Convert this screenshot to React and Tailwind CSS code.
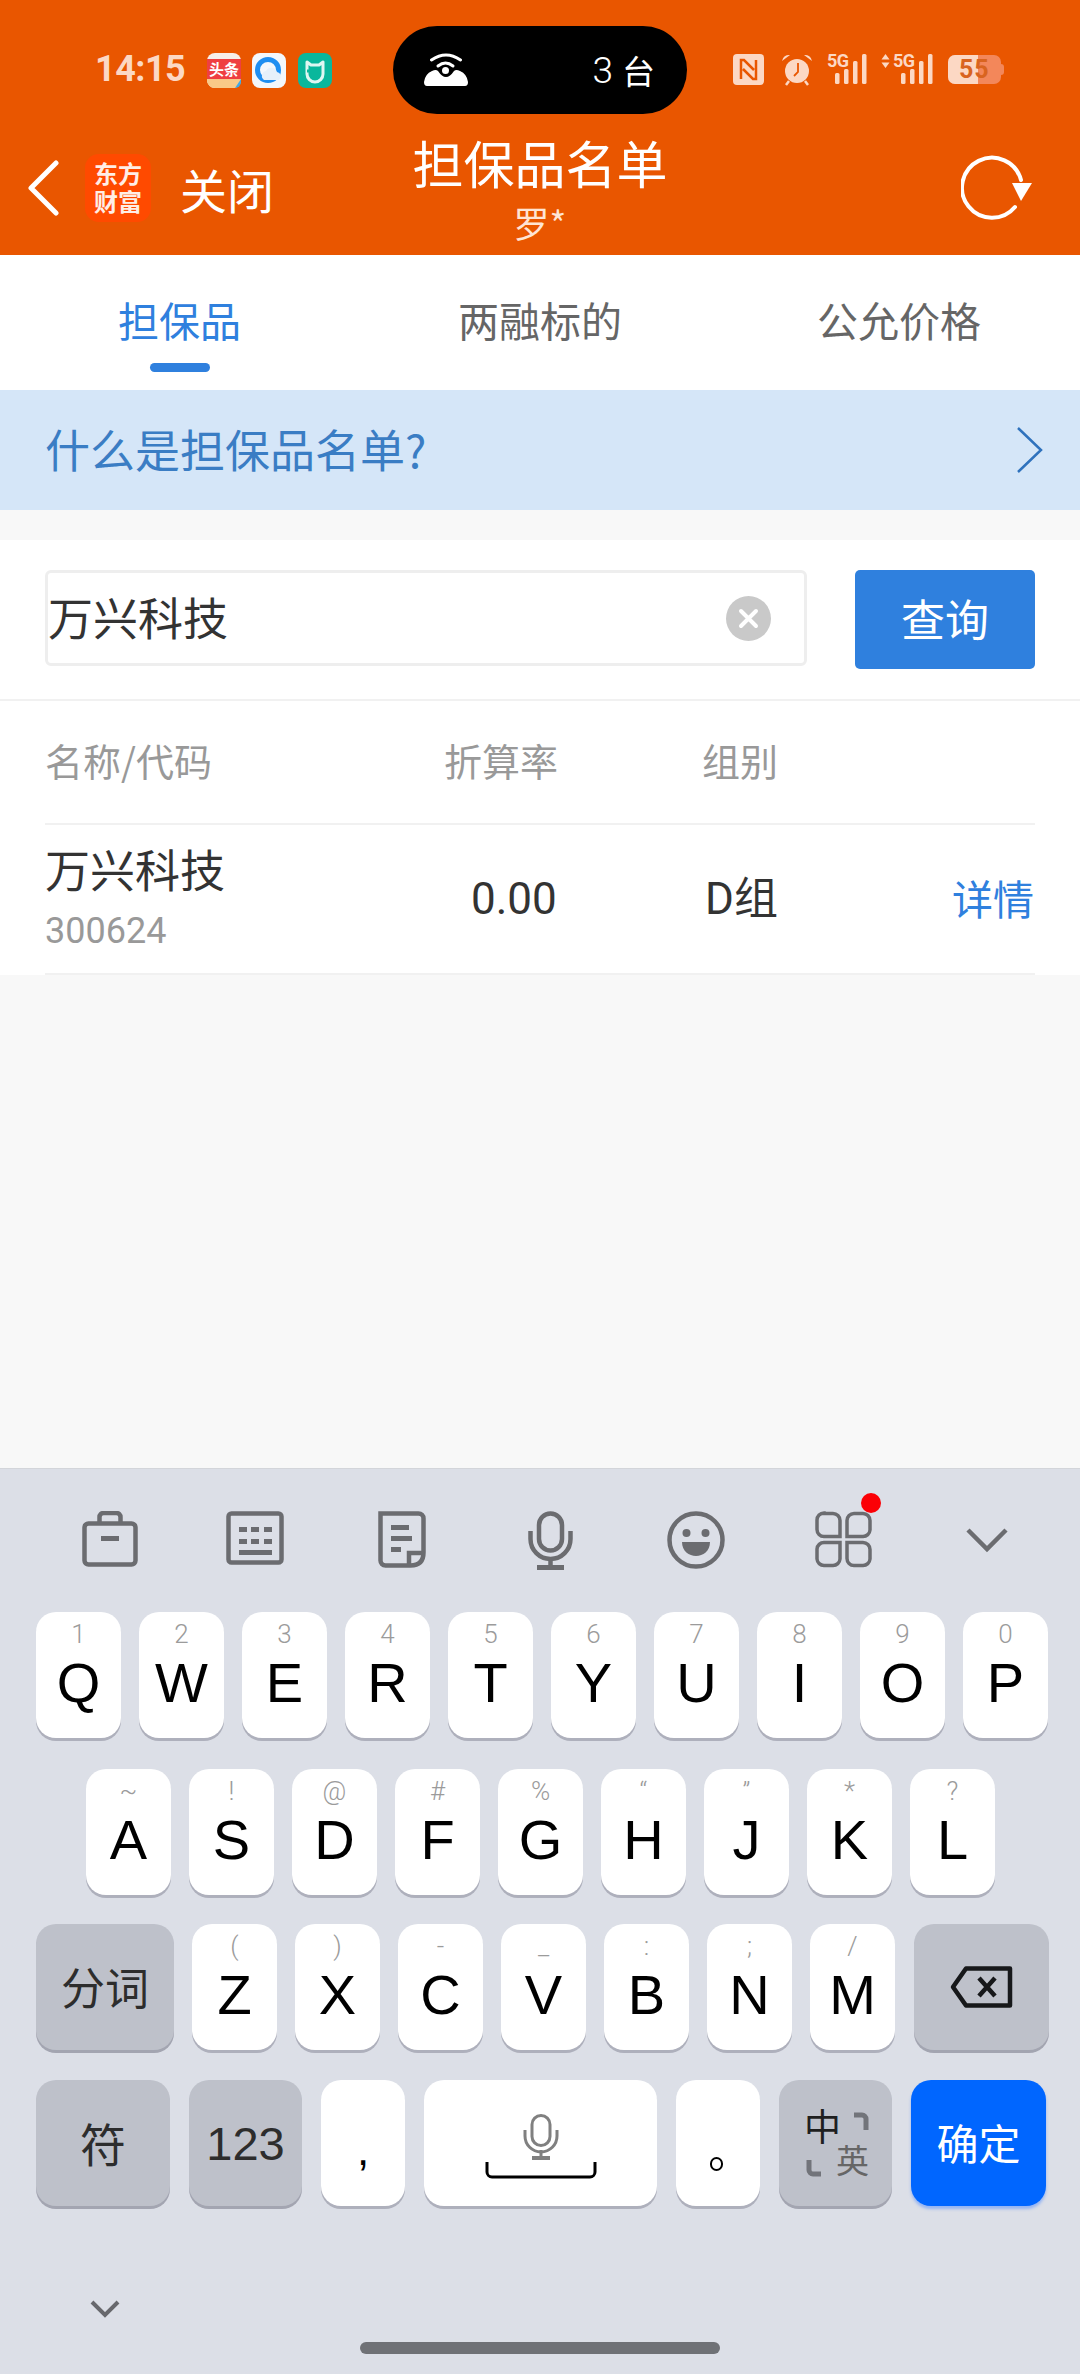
import React from "react";

const CJK = { fontFamily: '"Noto Sans CJK SC", "Noto Sans", sans-serif' };
const LATIN = { fontFamily: '"Liberation Sans", "Noto Sans CJK SC", sans-serif' };
const ROBOTO = { fontFamily: 'Roboto, "Noto Sans CJK SC", sans-serif' };

const PALE = "#fcd8c4";

function ToutiaoIcon() {
  return (
    <svg width="34" height="35" viewBox="0 0 34 35" className="mr-[11px]">
      <rect width="34" height="35" rx="8" fill="#f6efe9" />
      <path d="M0 6h34v20H0z" fill="#ef3f41" />
      <path d="M0 26h34v1a8 8 0 0 1-8 8H8a8 8 0 0 1-8-8z" fill="#f9c987" />
      <path d="M28 35l6-9v3a6 6 0 0 1-6 6z" fill="#3fa9e8" />
      <text x="17" y="22" textAnchor="middle" fontSize="15" fontWeight="700" fill="#fff" style={CJK}>头条</text>
    </svg>
  );
}

function QQIcon() {
  return (
    <svg width="34" height="35" viewBox="0 0 34 35" className="mr-[12px]">
      <rect width="34" height="35" rx="8" fill="#f3f7fc" />
      <circle cx="16" cy="17" r="10.5" fill="none" stroke="#1f8ef1" strokeWidth="5" />
      <path d="M12 27a5 5 0 0 1 2-9 6 6 0 0 1 11 1 4.500 4.500 0 0 1 2 8z" fill="#e6f0fa" />
    </svg>
  );
}

function MiIcon() {
  return (
    <svg width="34" height="35" viewBox="0 0 34 35">
      <rect width="34" height="35" rx="8" fill="#0ab79c" />
      <path d="M9 9l4 3h8l4-3v12a8 8 0 0 1-16 0z" fill="none" stroke="#dff7f2" strokeWidth="3" strokeLinejoin="round" />
      <path d="M9 18h5" stroke="#0ab79c" strokeWidth="3" />
    </svg>
  );
}

function HotspotIcon() {
  return (
    <svg width="44" height="34" viewBox="0 0 44 34">
      <path d="M7.500 7Q22-3 36.500 7" fill="none" stroke="#fff" strokeWidth="3" strokeLinecap="round" />
      <path d="M14 13Q21.500 7 29 13" fill="none" stroke="#fff" strokeWidth="3" strokeLinecap="round" />
      <circle cx="21.500" cy="17.500" r="3.500" fill="#fff" />
      <path d="M3 33Q0 33 0 29Q1 21 8 18Q12 16 14 18Q18 24 22 24Q26 24 30 18Q32 16 36 18Q43 21 44 29Q44 33 41 33Z" fill="#fff" />
    </svg>
  );
}

function NfcIcon() {
  return (
    <svg width="31" height="31" viewBox="0 0 31 31" className="mr-[17px]">
      <rect width="31" height="31" rx="4" fill={PALE} />
      <path d="M8 25V6h3l10 10M23 6v19h-3L10 15" fill="none" stroke="#e95600" strokeWidth="2.500" />
    </svg>
  );
}

function AlarmIcon() {
  return (
    <svg width="32" height="33" viewBox="0 0 32 33" className="mr-[14px]">
      <circle cx="16" cy="18" r="12" fill={PALE} />
      <path d="M1 8a7 7 0 0 1 8-6zM31 8a7 7 0 0 0-8-6z" fill={PALE} />
      <path d="M8 28l-3 4M24 28l3 4" stroke={PALE} strokeWidth="2.500" />
      <path d="M17 10v9l-4 4" fill="none" stroke="#e95600" strokeWidth="1.800" />
    </svg>
  );
}

function Signal5G({ arrows }) {
  return (
    <div className="flex items-start h-[31px]" style={ROBOTO}>
      {arrows && (
        <svg width="9" height="14" viewBox="0 0 9 14" className="mt-[0px] mr-[3px]">
          <path d="M4.500 0l4 5.500H.5zM4.500 14l4-5.500H.5z" fill={PALE} />
        </svg>
      )}
      <div className="relative w-[41px] h-[31px]">
        <span className="absolute left-0 top-[-3px] text-[18px] font-bold leading-[20px] tracking-[-0.5px] text-[#fcd8c4]">5G</span>
        <svg width="41" height="31" viewBox="0 0 41 31" className="absolute left-0 top-0">
          <rect x="8" y="19" width="4.500" height="11" rx="1.500" fill={PALE} />
          <rect x="17" y="15" width="4.500" height="15" rx="1.500" fill={PALE} />
          <rect x="26" y="7" width="4.500" height="23" rx="1.500" fill={PALE} />
          <rect x="35" y="0" width="4.500" height="30" rx="1.500" fill={PALE} />
        </svg>
      </div>
    </div>
  );
}

function Battery() {
  return (
    <div className="relative w-[56px] h-[29px]">
      <div className="absolute left-0 top-0 h-[29px] w-[53px] rounded-[7px] bg-[#f3875a]" />
      <div className="absolute left-0 top-0 h-[29px] w-[30px] rounded-l-[7px] bg-[#fcd8c4]" />
      <div className="absolute right-0 top-[9px] h-[11px] w-[3px] rounded-r-[3px] bg-[#f3875a]" />
      <div className="absolute left-[11px] top-0 h-[29px] leading-[29px] text-[25px] font-bold tracking-[1px] text-[#d9641f]" style={ROBOTO}>55</div>
    </div>
  );
}

function StatusBar() {
  return (
    <div className="flex items-center h-[140px]" style={CJK}>
      <div className="flex items-center w-[393px] pl-[95px]">
        <span className="w-[112px] mb-[3px] text-[36px] font-bold leading-none tracking-[-0.5px] text-[#fcd8c4]" style={ROBOTO}>14:15</span>
        <ToutiaoIcon />
        <QQIcon />
        <MiIcon />
      </div>
      <div className="flex items-center justify-between w-[294px] h-[88px] rounded-full bg-black pl-[31px] pr-[32px]">
        <HotspotIcon />
        <span className="flex items-center text-white leading-none">
          <span className="text-[37px] font-light mr-[9px]" style={ROBOTO}>3</span>
          <span className="text-[33px]">台</span>
        </span>
      </div>
      <div className="flex items-center pl-[46px] mb-[2px]">
        <NfcIcon />
        <AlarmIcon />
        <div className="mr-[13px]"><Signal5G /></div>
        <div className="mr-[14px]"><Signal5G arrows /></div>
        <Battery />
      </div>
    </div>
  );
}

function NavBar() {
  return (
    <div className="grid grid-cols-[1fr_auto_1fr] items-start h-[115px]" style={CJK}>
      <div className="flex items-center pl-[27px] h-[88px] pt-[8px]">
        <svg width="32" height="56" viewBox="0 0 32 56" className="mr-[26px]">
          <path d="M29 3L4 28l25 25" fill="none" stroke="#fff" strokeWidth="5" strokeLinecap="round" strokeLinejoin="round" />
        </svg>
        <div className="flex items-center justify-center text-center w-[66px] h-[68px] rounded-[14px] bg-[#ff4a00] pb-[3px] text-[24px] font-bold leading-[28px] text-[#ffeee6]">
          <span>东方<br />财富</span>
        </div>
        <span className="ml-[29px] text-[47px] leading-none text-white">关闭</span>
      </div>
      <div className="flex flex-col items-center text-white">
        <span className="text-[51px] leading-[52px] mt-[-4px]">担保品名单</span>
        <span className="text-[36px] leading-[42px] mt-[13px] text-[#ffe4d4]">罗*</span>
      </div>
      <div className="flex justify-end pr-[47px] pt-[15px]">
        <svg width="72" height="66" viewBox="0 0 72 66">
          <path d="M54 52A30 30 0 1 1 60 25" fill="none" stroke="#fff" strokeWidth="4" strokeLinecap="round" />
          <path d="M51 28h20L60 46z" fill="#fff" />
        </svg>
      </div>
    </div>
  );
}

function Tabs() {
  return (
    <div className="relative h-[135px] bg-white text-[41px]" style={CJK}>
      <div className="flex h-[128px] items-center pl-[118px]">
        <span className="w-[340px] text-[#2f80de] leading-none">担保品</span>
        <span className="w-[359px] text-[#666666] leading-none">两融标的</span>
        <span className="text-[#666666] leading-none">公允价格</span>
      </div>
      <div className="absolute left-[150px] top-[108px] h-[9px] w-[60px] rounded-full bg-[#2f80de]" />
    </div>
  );
}

function Banner() {
  return (
    <div className="flex items-center justify-between h-[120px] pl-[45px] pr-[37px] bg-[#d5e6f8]" style={CJK}>
      <span className="mb-[4px] text-[45px] leading-none text-[#3a7dc4]">什么是担保品名单?</span>
      <svg width="27" height="48" viewBox="0 0 27 48">
        <path d="M2 2l23 22L2 46" fill="none" stroke="#2f72bd" strokeWidth="2.500" />
      </svg>
    </div>
  );
}

function Search() {
  return (
    <div className="flex items-start h-[161px] bg-white px-[45px] pt-[30px] border-b-2 border-[#f1f1f1]" style={CJK}>
      <div className="flex items-center justify-between w-[762px] h-[96px] rounded-[6px] border-[3px] border-[#eeeeee] pr-[33px]">
        <span className="mb-[4px] text-[45px] leading-none text-[#333333]">万兴科技</span>
        <svg width="45" height="45" viewBox="0 0 45 45">
          <circle cx="22.500" cy="22.500" r="22.500" fill="#c9c9c9" />
          <path d="M15 15l15 15M30 15L15 30" stroke="#fff" strokeWidth="4" strokeLinecap="round" />
        </svg>
      </div>
      <div className="flex items-center justify-center w-[180px] h-[99px] ml-[48px] pb-[4px] rounded-[5px] bg-[#2f80de] text-[44px] text-white leading-none">查询</div>
    </div>
  );
}

function Table() {
  return (
    <div className="bg-white px-[45px]" style={CJK}>
      <div className="flex items-center h-[124px] pb-[5px] border-b-2 border-[#f1f1f1] text-[38px] leading-none text-[#999999]">
        <span className="w-[399px]">名称/代码</span>
        <span className="w-[258px]">折算率</span>
        <span>组别</span>
      </div>
      <div className="flex items-center h-[150px] border-b-2 border-[#f1f1f1]">
        <div className="w-[426px] flex flex-col">
          <span className="text-[45px] leading-[43px] text-[#333333]">万兴科技</span>
          <span className="mt-[20px] text-[36px] leading-[42px] text-[#999999]" style={ROBOTO}>300624</span>
        </div>
        <span className="w-[234px] text-[44px] leading-none text-[#333333]" style={ROBOTO}>0.00</span>
        <span className="text-[44px] leading-none text-[#333333]" style={ROBOTO}>D组</span>
        <span className="ml-auto mb-[3px] mr-[1px] text-[41px] leading-none text-[#2f80de]">详情</span>
      </div>
    </div>
  );
}

const ICON = "#6b6c70";

function ToolIcons() {
  return (
    <div className="relative flex items-start h-[143px] pl-[82px] pt-[42px]">
      <svg width="56" height="56" viewBox="0 0 56 56" className="mr-[88px]">
        <rect x="2.500" y="12.500" width="51" height="41" rx="4" fill="none" stroke={ICON} strokeWidth="4.500" />
        <path d="M17.500 12V6a4 4 0 0 1 4-4h13a4 4 0 0 1 4 4v6" fill="none" stroke={ICON} strokeWidth="4.500" />
        <rect x="19" y="25" width="18" height="5" fill={ICON} />
      </svg>
      <svg width="58" height="54" viewBox="0 0 58 54" className="mr-[94px]">
        <rect x="2.500" y="2.500" width="53" height="49" rx="3" fill="none" stroke={ICON} strokeWidth="4.500" />
        <path d="M13 16h8v5h-8zM25 16h8v5h-8zM38 16h8v5h-8zM13 28h8v5h-8zM25 28h8v5h-8zM38 28h8v5h-8zM13 39h33v5H13z" fill={ICON} />
      </svg>
      <svg width="48" height="57" viewBox="0 0 48 57" className="mr-[102px]">
        <path d="M2.500 2.500h38a5 5 0 0 1 5 5v34q0 13-13 13H7.500a5 5 0 0 1-5-5z" fill="none" stroke={ICON} strokeWidth="4.500" />
        <path d="M31 54V42h14" fill="none" stroke={ICON} strokeWidth="4.500" />
        <path d="M13 14h18v5H13zM13 25h21v5H13zM13 36h10v5H13z" fill={ICON} />
      </svg>
      <svg width="46" height="60" viewBox="0 0 46 60" className="mr-[93px]">
        <rect x="11" y="2.500" width="23" height="37" rx="11.500" fill="none" stroke={ICON} strokeWidth="4.500" />
        <path d="M2.500 20v8a20 20 0 0 0 40 0v-8" fill="none" stroke={ICON} strokeWidth="4.500" />
        <path d="M22.500 48v7" stroke={ICON} strokeWidth="4.500" />
        <rect x="9" y="54" width="27" height="5" fill={ICON} />
      </svg>
      <svg width="58" height="58" viewBox="0 0 58 58" className="mr-[90px]">
        <circle cx="29" cy="29" r="26.500" fill="none" stroke={ICON} strokeWidth="4.500" />
        <circle cx="19.500" cy="22" r="4" fill={ICON} />
        <circle cx="38.500" cy="22" r="4" fill={ICON} />
        <path d="M15 31h28c0 9-7 14-14 14s-14-5-14-14z" fill={ICON} />
      </svg>
      <svg width="57" height="57" viewBox="0 0 57 57" className="mr-[94px]">
        <path d="M9 2.500h9a7 7 0 0 1 7 7v16H9a7 7 0 0 1-7-7V9a7 7 0 0 1 7-7zM32 9.500a7 7 0 0 1 7-7h9a7 7 0 0 1 7 7V19a7 7 0 0 1-7 6.500H32zM2 38a7 7 0 0 1 7-6.500h16V48a7 7 0 0 1-7 6.500H9A7 7 0 0 1 2 48zM32 31.500h16a7 7 0 0 1 7 7V48a7 7 0 0 1-7 6.500h-9a7 7 0 0 1-7-7z" fill="none" stroke={ICON} strokeWidth="3.500" />
      </svg>
      <svg width="42" height="26" viewBox="0 0 42 26" className="mt-[16px]">
        <path d="M2 3l19 19L40 3" fill="none" stroke={ICON} strokeWidth="4.500" />
      </svg>
      <div className="absolute left-[861px] top-[24px] h-[20px] w-[20px] rounded-full bg-[#fb0006]" />
    </div>
  );
}

function Key({ label, hint }) {
  return (
    <div className="relative w-[85px] h-[126px] rounded-[20px] bg-white shadow-[0_3px_0_#aeb0bc] flex flex-col items-center" style={LATIN}>
      <span className="h-[30px] mt-[7px] text-[26px] leading-[30px] font-light text-[#9b9b9b]" style={ROBOTO}>{hint}</span>
      <span className="mt-[3px] text-[56px] leading-[62px] text-black">{label}</span>
    </div>
  );
}

function GreyKey({ children, className = "" }) {
  return (
    <div className={`flex items-center justify-center h-[126px] rounded-[20px] bg-[#bec1ca] shadow-[0_3px_0_#a3a5b1] text-[#2d2d2d] leading-none ${className}`} style={CJK}>
      {children}
    </div>
  );
}

function Row({ keys, className }) {
  return (
    <div className={`flex gap-[18px] ${className}`}>
      {keys.map(([label, hint]) => (
        <Key key={label} label={label} hint={hint} />
      ))}
    </div>
  );
}

function Keyboard() {
  const row1 = [["Q", "1"], ["W", "2"], ["E", "3"], ["R", "4"], ["T", "5"], ["Y", "6"], ["U", "7"], ["I", "8"], ["O", "9"], ["P", "0"]];
  const row2 = [["A", "~"], ["S", "!"], ["D", "@"], ["F", "#"], ["G", "%"], ["H", "“"], ["J", "”"], ["K", "*"], ["L", "?"]];
  const row3 = [["Z", "("], ["X", ")"], ["C", "-"], ["V", "_"], ["B", ":"], ["N", ";"], ["M", "/"]];
  return (
    <div className="bg-[#dcdfe7] h-[906px] border-t border-[#d3d5da]">
      <ToolIcons />
      <Row keys={row1} className="pl-[36px]" />
      <Row keys={row2} className="pl-[86px] mt-[31px]" />
      <div className="flex mt-[29px] pl-[36px]">
        <GreyKey className="w-[138px] mr-[18px] pb-[3px] text-[44px]">分词</GreyKey>
        <div className="flex gap-[18px]">
          {row3.map(([label, hint]) => <Key key={label} label={label} hint={hint} />)}
        </div>
        <GreyKey className="w-[135px] ml-[19px]">
          <svg width="64" height="42" viewBox="0 0 64 42">
            <path d="M16 2.500h44v37H16L3 21z" fill="none" stroke="#17181a" strokeWidth="4.500" strokeLinejoin="round" />
            <path d="M29 12l16 18M45 12L29 30" stroke="#17181a" strokeWidth="4.500" />
          </svg>
        </GreyKey>
      </div>
      <div className="flex mt-[30px] pl-[36px] gap-[19px]">
        <GreyKey className="w-[134px] pb-[3px] text-[46px]">符</GreyKey>
        <GreyKey className="w-[113px] text-[47px]"><span style={LATIN}>123</span></GreyKey>
        <div className="flex items-center justify-center w-[84px] h-[126px] rounded-[20px] bg-white shadow-[0_3px_0_#aeb0bc] text-[44px] text-black pt-[14px]" style={LATIN}>,</div>
        <div className="flex flex-col items-center w-[233px] h-[126px] rounded-[20px] bg-white shadow-[0_3px_0_#aeb0bc] pt-[34px]">
          <svg width="36" height="46" viewBox="0 0 36 46">
            <rect x="9" y="1.500" width="18" height="30" rx="9" fill="none" stroke="#808080" strokeWidth="3" />
            <path d="M2 16v6a16 16 0 0 0 32 0v-6" fill="none" stroke="#808080" strokeWidth="3" />
            <path d="M18 36v7" stroke="#808080" strokeWidth="3" />
            <rect x="9" y="42" width="18" height="4" fill="#808080" />
          </svg>
          <svg width="112" height="17" viewBox="0 0 112 17" className="mt-[2px]">
            <path d="M2 0v10a5 5 0 0 0 5 5h98a5 5 0 0 0 5-5V0" fill="none" stroke="#000" strokeWidth="3" />
          </svg>
        </div>
        <div className="relative flex items-center justify-center w-[84px] h-[126px] rounded-[20px] bg-white shadow-[0_3px_0_#aeb0bc]">
          <div className="mt-[41px] ml-[-3px] h-[14px] w-[13px] rounded-full border-[2.5px] border-black" />
        </div>
        <GreyKey className="relative w-[113px]">
          <span className="absolute left-[25px] top-[27px] text-[37px] text-[#1f1f1f]">中</span>
          <span className="absolute left-[57px] top-[63px] text-[33px] text-[#666666]">英</span>
          <svg width="113" height="126" viewBox="0 0 113 126" className="absolute left-0 top-0">
            <path d="M75 35h8a4 4 0 0 1 4 4v11M30 80v10a4 4 0 0 0 4 4h8" fill="none" stroke="#72747a" strokeWidth="5" />
          </svg>
        </GreyKey>
        <div className="flex items-center justify-center w-[135px] h-[126px] pb-[3px] rounded-[20px] bg-[#0066ff] shadow-[0_3px_3px_rgba(80,140,255,0.5)] text-[42px] leading-none text-white" style={CJK}>确定</div>
      </div>
      <div className="pl-[90px] mt-[94px]">
        <svg width="30" height="18" viewBox="0 0 30 18" className="block">
          <path d="M2 2l13 13L28 2" fill="none" stroke="#67686d" strokeWidth="4" />
        </svg>
      </div>
      <div className="mx-auto mt-[24px] h-[12px] w-[360px] rounded-full bg-[#6f7176]" />
    </div>
  );
}

export default function App() {
  return (
    <div className="w-[1080px] h-[2374px] overflow-hidden bg-[#f8f8f8]">
      <div className="bg-[#e95600] h-[255px]">
        <StatusBar />
        <NavBar />
      </div>
      <Tabs />
      <Banner />
      <div className="h-[30px]" />
      <Search />
      <Table />
      <div className="h-[493px]" />
      <Keyboard />
    </div>
  );
}
